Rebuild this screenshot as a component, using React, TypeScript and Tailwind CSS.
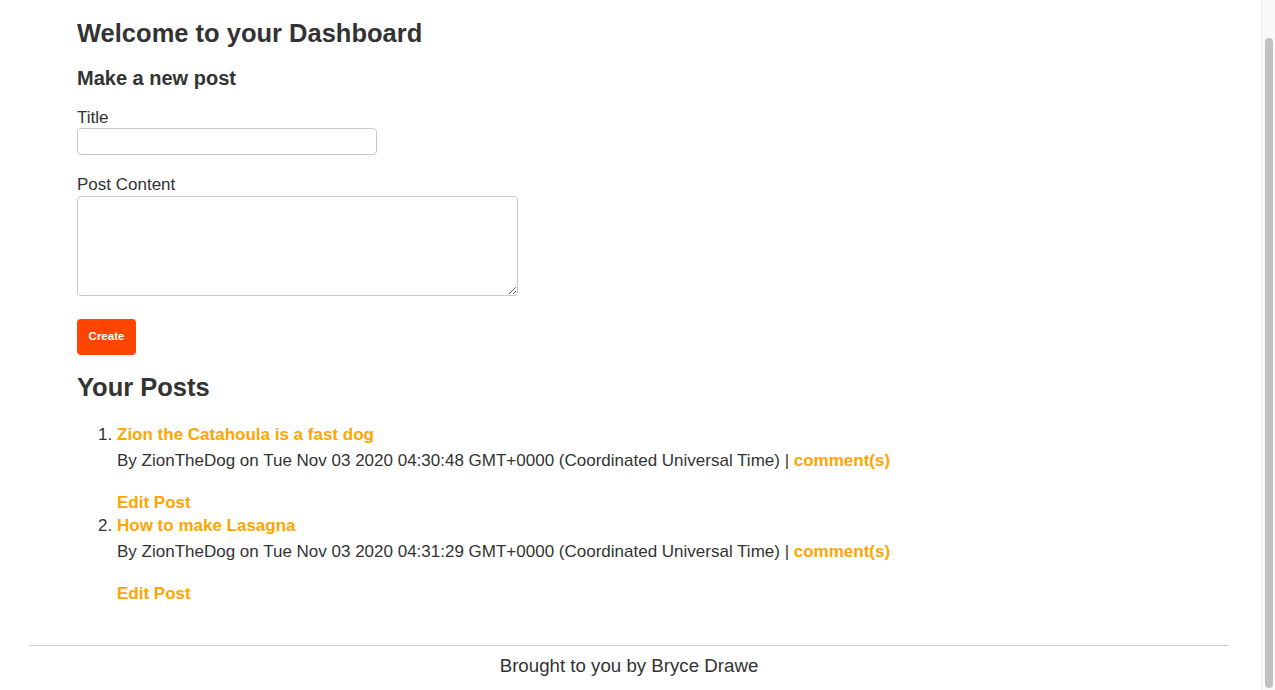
export default function App() {
  const posts = [
    { title: 'Zion the Catahoula is a fast dog', date: 'Tue Nov 03 2020 04:30:48 GMT+0000 (Coordinated Universal Time)' },
    { title: 'How to make Lasagna', date: 'Tue Nov 03 2020 04:31:29 GMT+0000 (Coordinated Universal Time)' },
  ];

  return (
    <div className="flex h-[690px] overflow-hidden bg-white text-[#333] font-['Liberation_Sans',Arial,sans-serif]">
      <div className="flex-1 flex flex-col">
        <main className="w-[1200px] ml-[29px] px-12 pt-[17px]">
          <h1 className="text-[25.5px] leading-[32px] font-bold">Welcome to your Dashboard</h1>
          <h3 className="mt-[17px] text-[20px] leading-[24px] font-bold">Make a new post</h3>

          <form className="mt-[18px]">
            <label className="block text-[17px] leading-[20px]">Title</label>
            <input type="text" className="block w-[300px] h-[27px] border border-[#c8c8c8] rounded-[4px]" />

            <label className="block mt-[20px] text-[17px] leading-[20px]">Post Content</label>
            <textarea className="block mt-[1px] w-[441px] h-[100px] border border-[#c8c8c8] rounded-[4px]" />

            <button
              type="button"
              className="mt-[23px] w-[59px] h-[36px] bg-[#ff4500] text-white text-[11.5px] font-bold rounded-[4px]"
            >
              Create
            </button>
          </form>

          <h2 className="mt-[16px] text-[25.5px] leading-[32px] font-bold">Your Posts</h2>

          <ol className="mt-[22px] list-decimal pl-10">
            {posts.map((p) => (
              <li key={p.title} className="text-[17px] leading-[20px] mb-[3px]">
                <a className="font-bold text-[#ffa500]">{p.title}</a>
                <p className="mt-[6px]">
                  By ZionTheDog on {p.date} | <a className="font-bold text-[#ffa500]">comment(s)</a>
                </p>
                <a className="block mt-[22px] font-bold text-[#ffa500]">Edit Post</a>
              </li>
            ))}
          </ol>
        </main>

        <footer className="mt-auto w-[1200px] ml-[29px] border-t border-[#ccc] pt-[9px] pb-[13px] text-center text-[18.7px] leading-[22px]">
          Brought to you by Bryce Drawe
        </footer>
      </div>

      <div className="w-[14px] shrink-0 bg-[#fafafa] border-l border-[#e8e8e8] flex flex-col pt-[38px] pb-[2px] items-center">
        <div className="w-[8px] flex-1 rounded-full bg-[#c1c1c1]" />
      </div>
    </div>
  );
}
